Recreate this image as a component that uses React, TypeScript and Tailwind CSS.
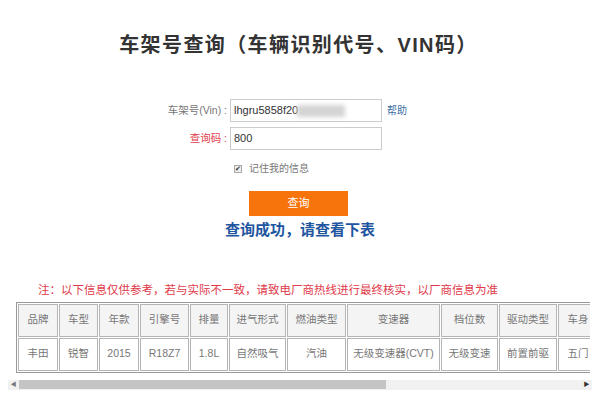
import React from 'react';

const headers = ['品牌', '车型', '年款', '引擎号', '排量', '进气形式', '燃油类型', '变速器', '档位数', '驱动类型', '车身'];
const values = ['丰田', '锐智', '2015', 'R18Z7', '1.8L', '自然吸气', '汽油', '无级变速器(CVT)', '无级变速', '前置前驱', '五门'];
const widths = [40, 39, 40, 49, 38, 57, 59, 93, 57, 58, 40];

const font = { fontFamily: '"Liberation Sans", "Noto Sans CJK SC", sans-serif' };

export default function App() {
  return (
    <div className="w-[597px] h-[400px] bg-white overflow-hidden text-[#555]" style={font}>
      {/* Title */}
      <h1 className="pt-[33px] text-center text-[20px] leading-[24px] font-bold tracking-[1.4px] text-[#333]">
        车架号查询（车辆识别代号、VIN码）
      </h1>

      {/* Form */}
      <div className="mt-[42px] flex flex-col gap-[5px]">
        <div className="flex items-center">
          <label className="w-[230px] pr-[3px] text-right text-[10.5px] text-[#777]">车架号(Vin) :</label>
          <div className="relative w-[152px] h-[23px] border border-[#ccc] flex items-center px-[3px] text-[11px] text-[#333]">
            lhgru5858f20
            <div className="absolute left-[66px] top-[5px] w-[48px] h-[12px] bg-[#d4d4d4] blur-[2px]" />
          </div>
          <a className="ml-[5px] text-[10px] text-[#3a6ea5]">帮助</a>
        </div>
        <div className="flex items-center">
          <label className="w-[230px] pr-[3px] text-right text-[10.5px] text-[#e0394a]">查询码 :</label>
          <div className="w-[152px] h-[23px] border border-[#ccc] flex items-center px-[3px] text-[11px] text-[#333]">
            800
          </div>
        </div>
        <div className="mt-[6px] flex items-center pl-[234px]">
          <span className="w-[8px] h-[8px] border border-[#aaa] bg-[#eee] flex items-center justify-center text-[7px] leading-none text-[#333]">✔</span>
          <span className="ml-[7px] text-[10px] text-[#777]">记住我的信息</span>
        </div>
      </div>

      {/* Submit */}
      <div className="mt-[14px] pl-[249px]">
        <button className="w-[99px] h-[25px] bg-[#f7730c] text-white text-[11px]">查询</button>
      </div>
      <div className="mt-[4px] pl-[225px] text-[15px] leading-[20px] font-bold text-[#1f56a0]">
        查询成功，请查看下表
      </div>

      {/* Note */}
      <div className="mt-[43px] pl-[38px] text-[11.5px] leading-[14px] text-[#e0394a] whitespace-nowrap">
        注：以下信息仅供参考，若与实际不一致，请致电厂商热线进行最终核实，以厂商信息为准
      </div>

      {/* Table */}
      <div className="mt-[5px] ml-[16px] w-[574px] overflow-hidden">
        <table className="border-separate border-spacing-[1px] border border-[#999] text-[10.5px] text-[#777]">
          <thead>
            <tr>
              {headers.map((h, i) => (
                <th
                  key={h}
                  className="h-[33px] border border-[#b5b5b5] bg-[#f4f4f4] font-normal text-center whitespace-nowrap"
                  style={{ minWidth: widths[i], width: widths[i] }}
                >
                  {h}
                </th>
              ))}
            </tr>
          </thead>
          <tbody>
            <tr>
              {values.map((v, i) => (
                <td
                  key={i}
                  className="h-[33px] border border-[#b5b5b5] bg-white text-center whitespace-nowrap"
                  style={{ minWidth: widths[i], width: widths[i] }}
                >
                  {v}
                </td>
              ))}
            </tr>
          </tbody>
        </table>
      </div>

      {/* Scrollbar */}
      <div className="mt-[7px] ml-[8px] w-[584px] h-[10px] bg-[#f1f1f1] flex items-center">
        <span className="w-[11px] flex justify-center text-[6px] text-[#777]">◀</span>
        <div className="w-[367px] h-[9px] bg-[#c4c4c4]" />
        <div className="flex-1" />
        <span className="w-[11px] flex justify-center text-[6px] text-[#333]">▶</span>
      </div>
    </div>
  );
}
